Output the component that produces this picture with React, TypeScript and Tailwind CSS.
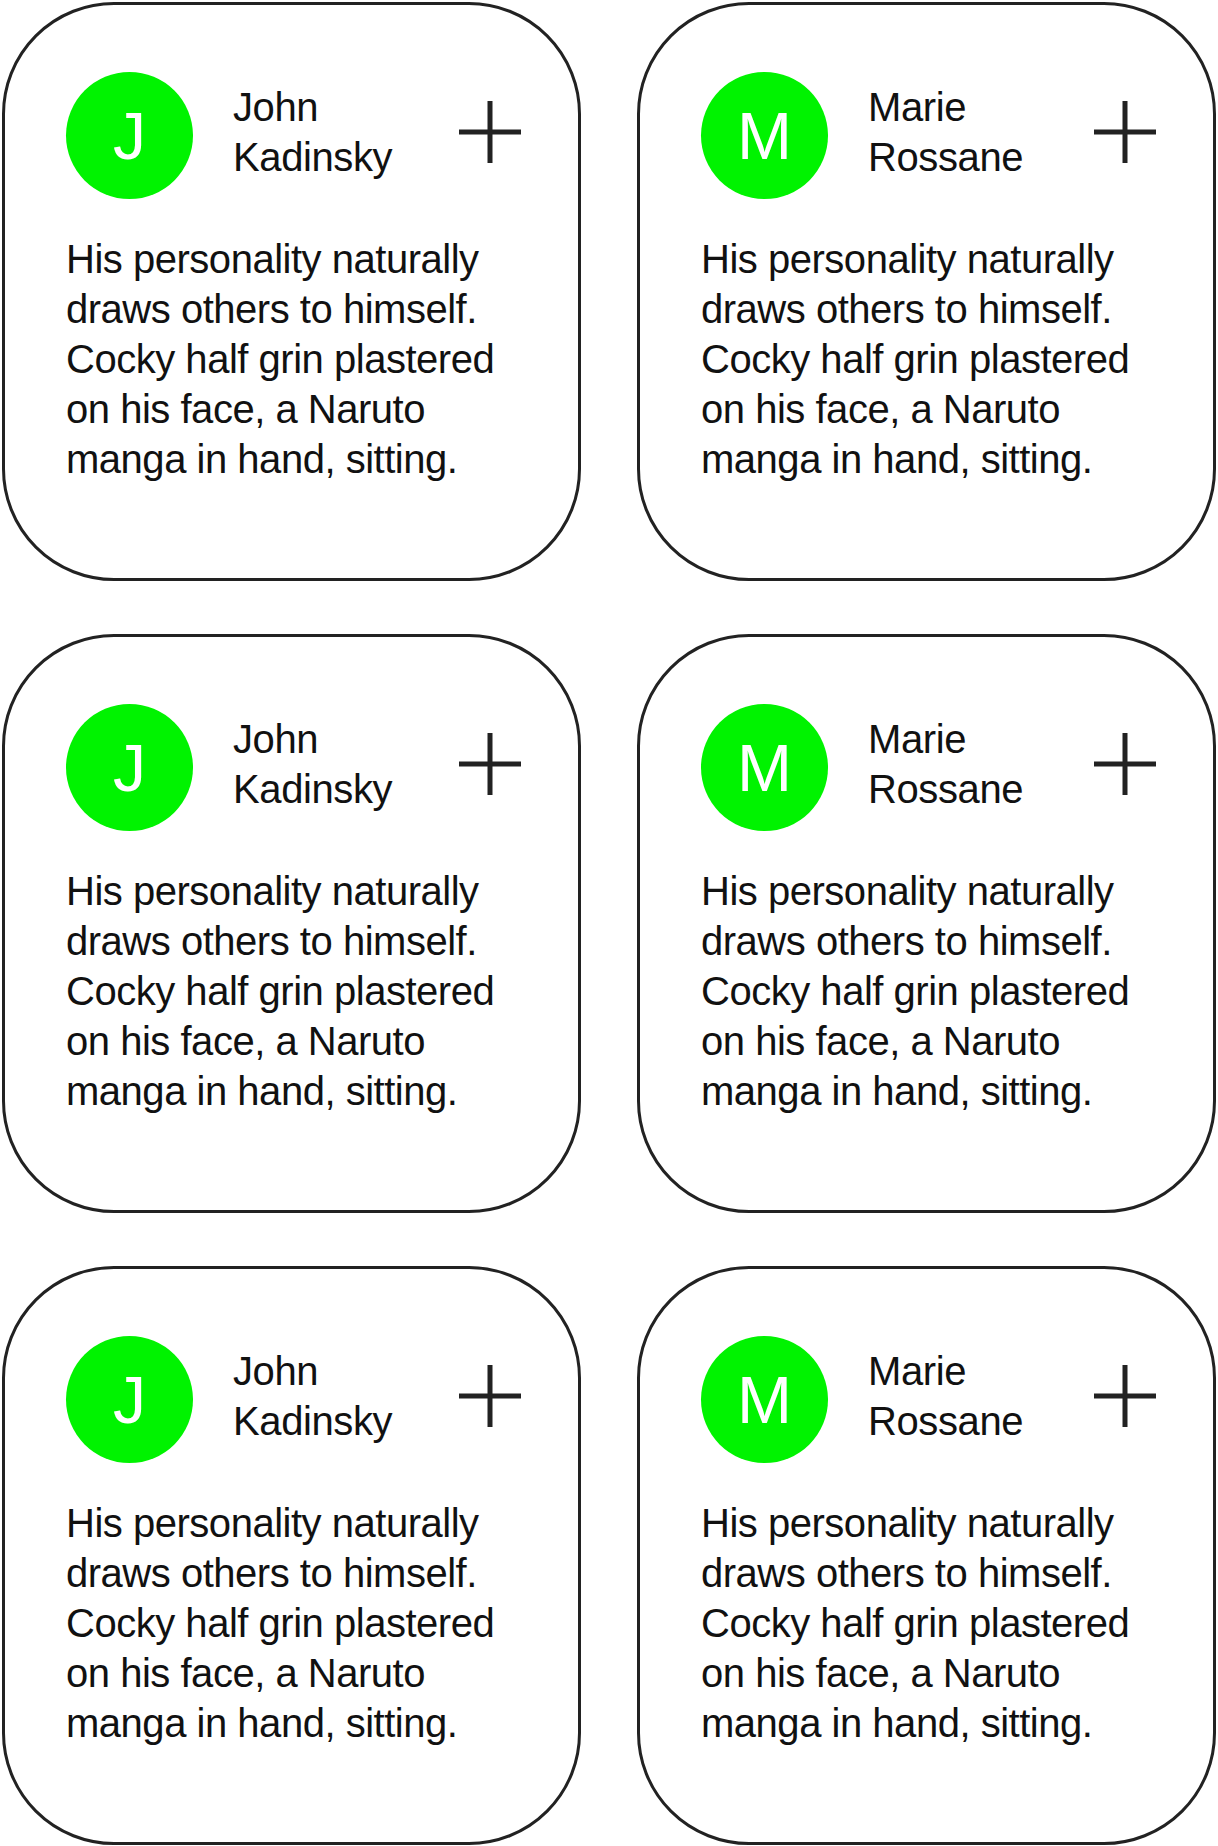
import React from "react";

type Person = {
  initial: string;
  first: string;
  last: string;
};

const people: Person[] = [
  { initial: "J", first: "John", last: "Kadinsky" },
  { initial: "M", first: "Marie", last: "Rossane" },
];

const bio =
  "His personality naturally draws others to himself. Cocky half grin plastered on his face, a Naruto manga in hand, sitting.";

const PlusIcon = () => (
  <svg width="62" height="62" viewBox="0 0 62 62" className="mb-[8px] shrink-0">
    <path d="M31 0v62M0 31h62" stroke="#222" strokeWidth="5" fill="none" />
  </svg>
);

const ProfileCard = ({ initial, first, last }: Person) => (
  <div className="h-[579px] rounded-[112px] border-[3px] border-[#222] bg-white pl-[61px] pr-[57px] pt-[67px]">
    <div className="flex items-center">
      <div className="flex h-[127px] w-[127px] shrink-0 items-center justify-center rounded-full bg-[#00f300] text-[66px] leading-none text-white">
        {initial}
      </div>
      <div className="mb-[8px] ml-[40px] flex-1 text-[40px] leading-[50px] tracking-[-0.01em] text-[#111]">
        <div>{first}</div>
        <div>{last}</div>
      </div>
      <PlusIcon />
    </div>
    <p className="mt-[35px] w-[445px] text-[40px] leading-[50px] tracking-[-0.012em] text-[#111]">
      {bio}
    </p>
  </div>
);

export default function App() {
  return (
    <main
      className="grid min-h-screen grid-cols-2 gap-x-[56px] gap-y-[53px] bg-white p-[2px]"
      style={{ fontFamily: '"Liberation Sans", Arial, sans-serif' }}
    >
      {[0, 1, 2].map((row) =>
        people.map((p) => <ProfileCard key={`${row}-${p.first}`} {...p} />)
      )}
    </main>
  );
}
